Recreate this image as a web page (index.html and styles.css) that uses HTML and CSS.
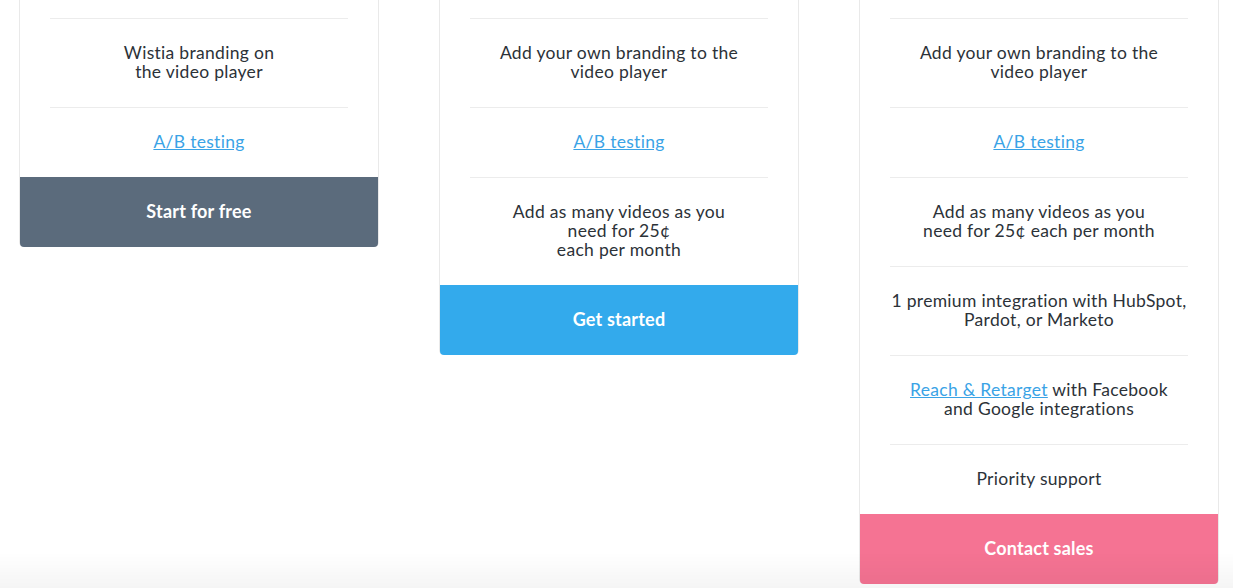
FILE: index.html
```html
<!DOCTYPE html>
<html>
<head>
    <meta charset="UTF-8" />
    <title>Pricing</title>
    <link rel="stylesheet" href="styles.css">
</head>
<body>
    <div class="plans">
        <div class="plan">
            <div class="feature">Wistia branding on<br>the video player</div>
            <div class="feature"><a href="#">A/B testing</a></div>
            <a class="cta cta-free" href="#">Start for free</a>
        </div>

        <div class="plan">
            <div class="feature">Add your own branding to the<br>video player</div>
            <div class="feature"><a href="#">A/B testing</a></div>
            <div class="feature">Add as many videos as you<br>need for 25¢<br>each per month</div>
            <a class="cta cta-pro" href="#">Get started</a>
        </div>

        <div class="plan">
            <div class="feature">Add your own branding to the<br>video player</div>
            <div class="feature"><a href="#">A/B testing</a></div>
            <div class="feature">Add as many videos as you<br>need for 25¢ each per month</div>
            <div class="feature">1 premium integration with HubSpot,<br>Pardot, or Marketo</div>
            <div class="feature"><a href="#">Reach &amp; Retarget</a> with Facebook<br>and Google integrations</div>
            <div class="feature">Priority support</div>
            <a class="cta cta-sales" href="#">Contact sales</a>
        </div>
    </div>

    <div class="fade"></div>
</body>
</html>
```

FILE: styles.css
```css
body {
    margin: 0;
    background-color: #ffffff;
    font-family: Lato, "Open Sans", Arial, sans-serif;
    color: #2c3238;
}

.plans {
    display: flex;
    align-items: flex-start;
    gap: 60px;
    padding-left: 19px;
}

.plan {
    width: 358px;
    border: 1px solid #e9e9e9;
    border-top: none;
    border-bottom: none;
    border-radius: 0 0 5px 5px;
    padding-top: 18px;
    background-color: #ffffff;
}

.feature {
    margin: 0 30px;
    padding: 24px 0 26px;
    border-top: 1px solid #ececec;
    text-align: center;
    font-size: 17.5px;
    letter-spacing: 0.3px;
    line-height: 19px;
    white-space: nowrap;
}

.feature a {
    color: #3aa3e6;
    text-decoration: underline;
}

.cta {
    display: block;
    height: 70px;
    line-height: 69px;
    text-align: center;
    color: #ffffff;
    font-weight: bold;
    font-size: 18px;
    letter-spacing: 0.2px;
    text-decoration: none;
    border-radius: 0 0 4px 4px;
}

.cta-free {
    background-color: #5b6b7c;
}

.cta-pro {
    background-color: #33aaec;
}

.cta-sales {
    background-color: #f57393;
}

.fade {
    position: fixed;
    left: 0;
    right: 0;
    bottom: 0;
    height: 36px;
    background: linear-gradient(rgba(0, 0, 0, 0), rgba(0, 0, 0, 0.04));
    pointer-events: none;
}
```
